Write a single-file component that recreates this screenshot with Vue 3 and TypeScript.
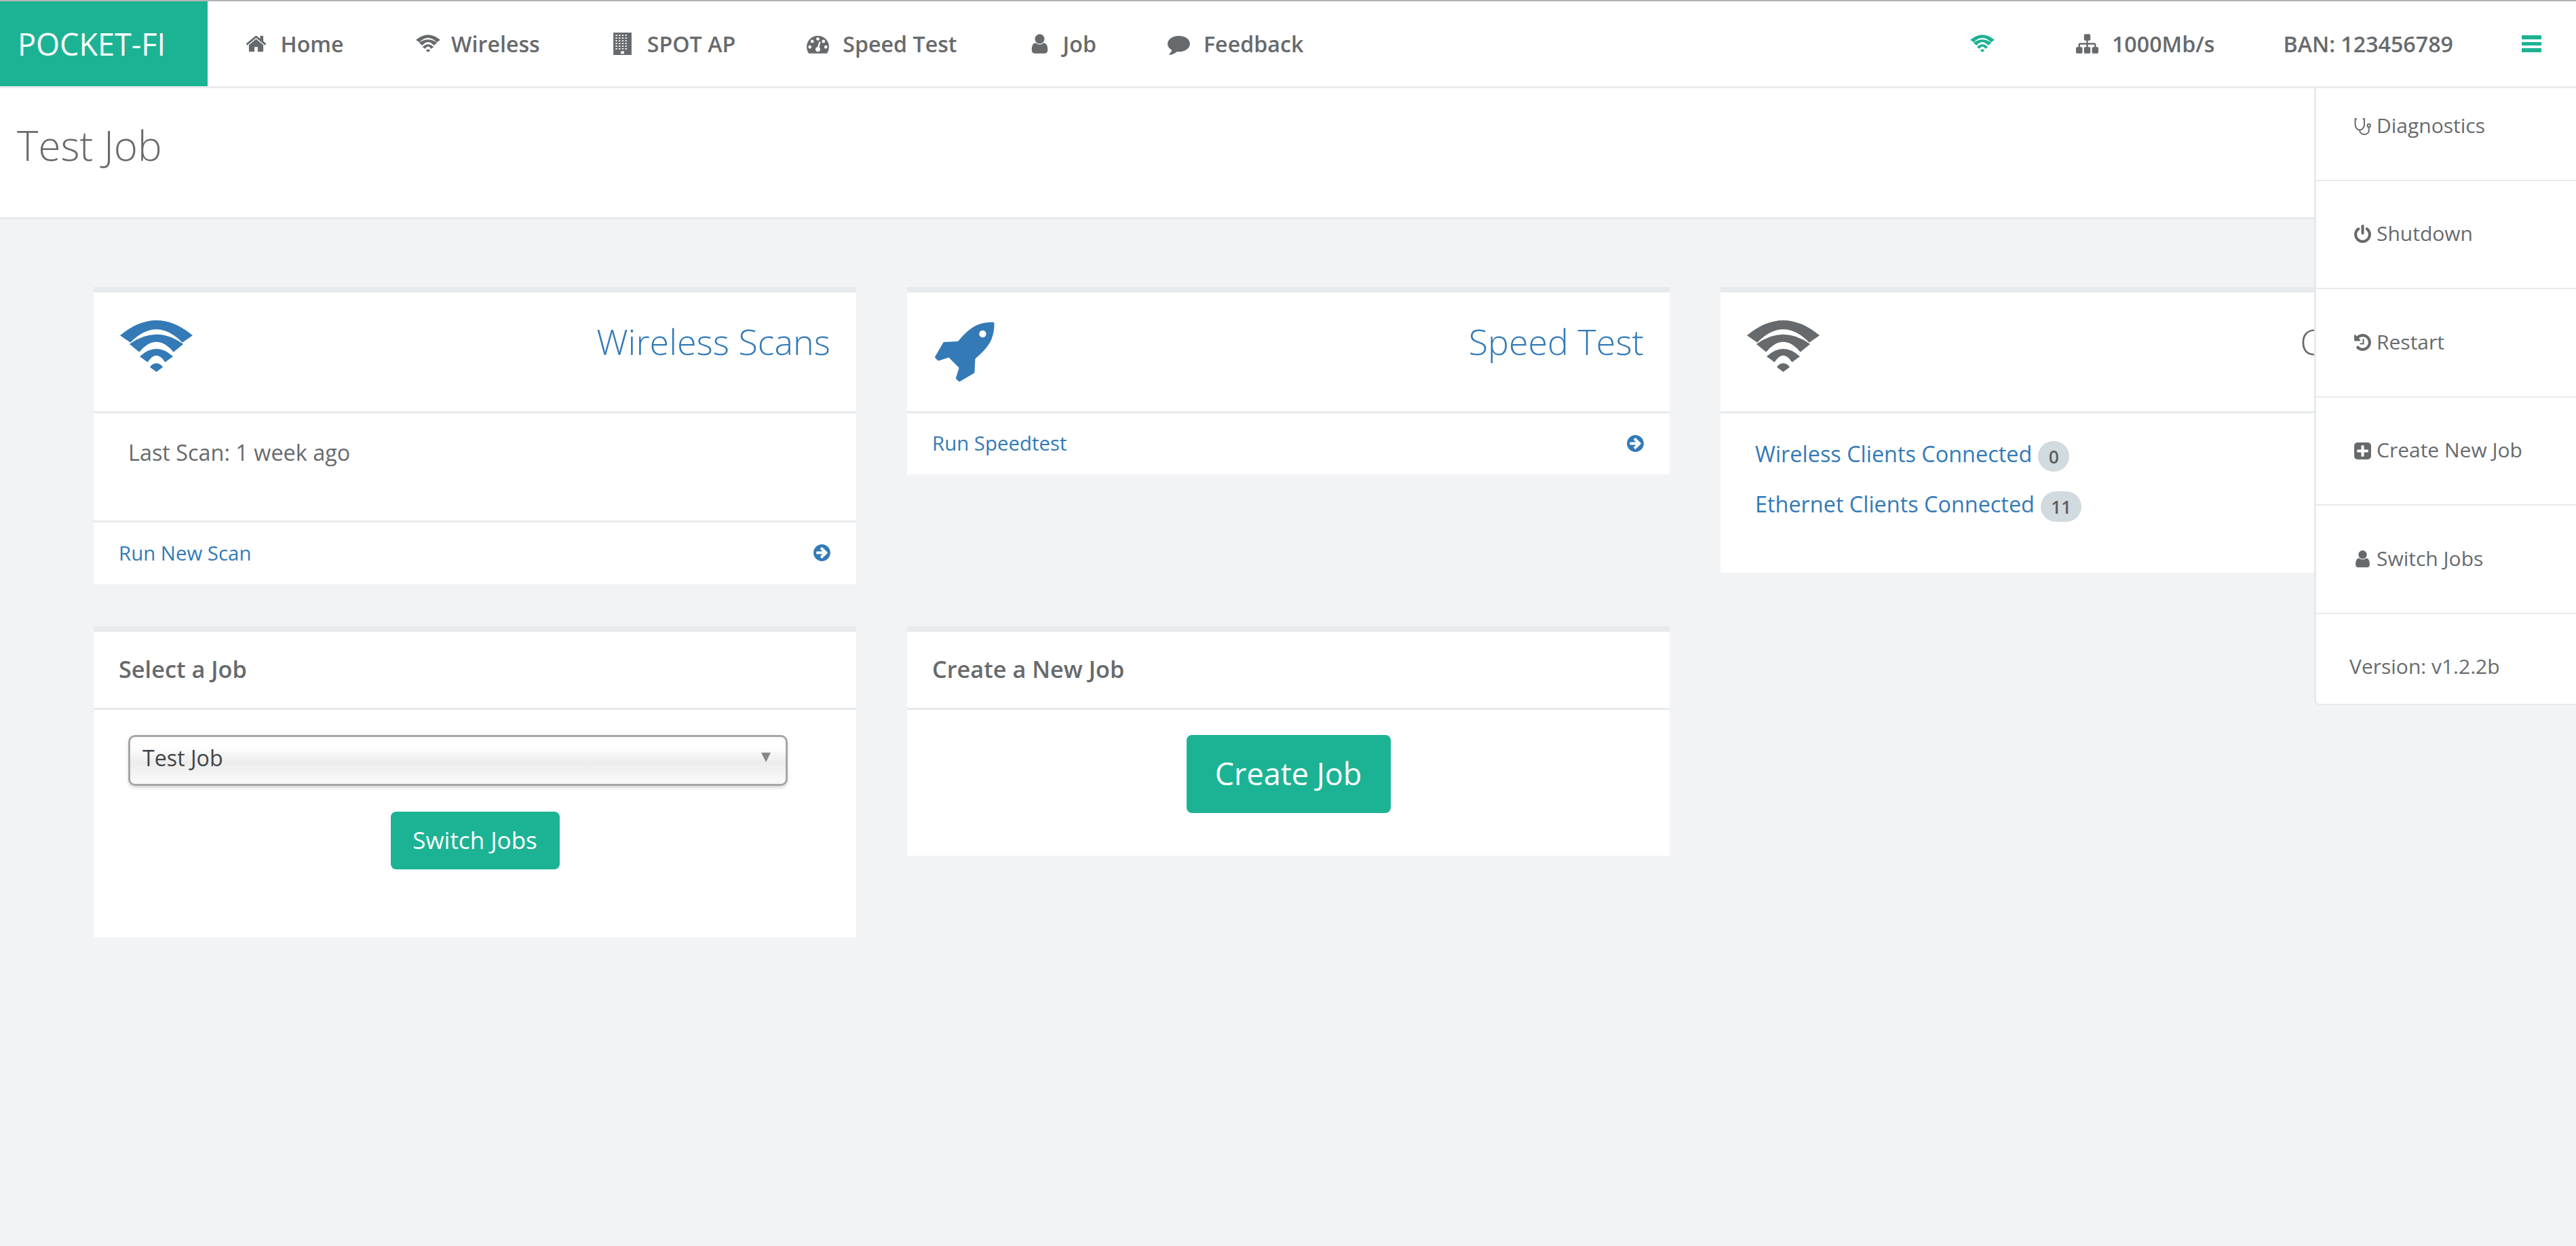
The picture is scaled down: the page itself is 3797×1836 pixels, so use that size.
<template>
  <div class="page">
    <nav class="topbar">
      <a class="brand">POCKET-FI</a>
      <ul class="nav">
        <li v-for="item in navItems" :key="item.label" class="nav-item">
          <svg class="nav-icon" :class="{ wide: item.icon === 'wifi' }" :viewBox="boxOf(item.icon)"><path :d="icons[item.icon]" /></svg>
          <span :class="{ 'pull-wifi': item.icon === 'wifi', 'pull-user': item.icon === 'user' }">{{ item.label }}</span>
        </li>
      </ul>
      <ul class="nav nav-right">
        <li class="nav-item status-wifi">
          <svg class="nav-icon wide" :viewBox="boxOf('wifi')"><path :d="icons.wifi" /></svg>
        </li>
        <li class="nav-item">
          <svg class="nav-icon" :viewBox="boxOf('sitemap')"><path :d="icons.sitemap" /></svg>
          <span>1000Mb/s</span>
        </li>
        <li class="nav-item">BAN: 123456789</li>
        <li class="nav-item burger"><i></i><i></i><i></i></li>
      </ul>
    </nav>

    <header class="title-bar">
      <h2>Test Job</h2>
    </header>

    <main class="content">
      <section class="card">
        <div class="stat-head">
          <svg class="big-icon wide blue" :viewBox="boxOf('wifi')"><path :d="icons.wifi" /></svg>
          <h3>Wireless Scans</h3>
        </div>
        <div class="scan-body">Last Scan: 1 week ago</div>
        <a class="card-foot">
          <span>Run New Scan</span>
          <svg class="go-icon" :viewBox="boxOf('arrow')"><path :d="icons.arrow" /></svg>
        </a>
      </section>

      <section class="card">
        <div class="stat-head">
          <svg class="big-icon blue" :viewBox="boxOf('rocket')"><path :d="icons.rocket" /></svg>
          <h3>Speed Test</h3>
        </div>
        <a class="card-foot first">
          <span>Run Speedtest</span>
          <svg class="go-icon" :viewBox="boxOf('arrow')"><path :d="icons.arrow" /></svg>
        </a>
      </section>

      <section class="card">
        <div class="stat-head">
          <svg class="big-icon wide grey" :viewBox="boxOf('wifi')"><path :d="icons.wifi" /></svg>
          <h3 class="muted">Connect</h3>
        </div>
        <div class="clients">
          <p v-for="row in clientRows" :key="row.label">
            <a>{{ row.label }}</a>
            <span class="badge">{{ row.count }}</span>
          </p>
        </div>
      </section>

      <section class="card select-card">
        <h4 class="card-title">Select a Job</h4>
        <div class="select-body">
          <div class="select-wrap">
            <select class="job-select">
              <option>Test Job</option>
            </select>
            <span class="caret"></span>
          </div>
          <button class="btn">Switch Jobs</button>
        </div>
      </section>

      <section class="card create-card">
        <h4 class="card-title">Create a New Job</h4>
        <div class="create-body">
          <button class="btn btn-lg">Create Job</button>
        </div>
      </section>
    </main>

    <aside class="side-menu">
      <a v-for="entry in menuItems" :key="entry.label" class="menu-item">
        <svg v-if="entry.icon" class="menu-icon" :viewBox="boxOf(entry.icon)"><path :d="icons[entry.icon]" /></svg>
        <svg v-else class="menu-icon scope" viewBox="-2 -2 29 29">
          <path d="M4 1.2H1.6v8.3a6.7 8 0 0 0 13.4 0V1.2h-2.4M8.3 17.5v1.5a6.7 5 0 0 0 13.4 0v-5.5" />
          <circle cx="21.7" cy="11" r="2.2" />
        </svg>
        <span>{{ entry.label }}</span>
      </a>
      <div class="menu-version">Version: v1.2.2b</div>
    </aside>
  </div>
</template>

<script setup lang="ts">
// office block: solid block, window holes wound the other way, and a door
const windowHoles = (): string => {
  let d = ''
  for (let row = 0; row < 6; row++) {
    for (let col = 0; col < 4; col++) {
      d += `M${345 + col * 256} ${180 + row * 215}v95h130v-95z`
    }
  }
  return d
}

const icons: Record<string, string> = {
  home: 'M1472 992v480q0 26-19 45t-45 19h-384v-384h-256v384h-384q-26 0-45-19t-19-45v-480q0-1 .5-3t.5-3l575-474 575 474q1 2 1 6zm223-69l-62 74q-8 9-21 11h-3q-13 0-21-7l-692-577-692 577q-12 8-24 7-13-2-21-11l-62-74q-8-10-7-23.5t11-21.5l719-599q32-26 76-26t76 26l244 204v-195q0-14 9-23t23-9h192q14 0 23 9t9 23v408l219 182q10 8 11 21.5t-7 23.5z',
  wifi: 'M0 22.3Q53.5-22.3 107 22.3L91.8 32.7Q53.5-6.1 15.2 32.7ZM13.8 35Q53.5 6.4 93.2 35L78.7 46.7Q53.5 16.7 28.3 46.7ZM29 53.3Q53.5 30.7 78 53.3L66.4 61.7Q53.5 41.7 40.6 61.7ZM53.5 63.3Q47.5 63.5 44 69L53.5 76 63 69Q59.5 63.5 53.5 63.3Z',
  building: `M168 0h1456v1792H168zM760 1500v200h272v-200z${windowHoles()}`,
  gauge: 'M384 1152q0-53-37.5-90.5t-90.5-37.5-90.5 37.5-37.5 90.5 37.5 90.5 90.5 37.5 90.5-37.5 37.5-90.5zm192-448q0-53-37.5-90.5t-90.5-37.5-90.5 37.5-37.5 90.5 37.5 90.5 90.5 37.5 90.5-37.5 37.5-90.5zm428 481l101-382q6-26-7.5-48.5t-38.5-29.5-48 6.5-30 39.5l-101 382q-60 5-107 43.5t-63 98.5q-20 77 20 146t117 89 146-20 89-117q16-60-6-117t-72-91zm660-33q0-53-37.5-90.5t-90.5-37.5-90.5 37.5-37.5 90.5 37.5 90.5 90.5 37.5 90.5-37.5 37.5-90.5zm-640-640q0-53-37.5-90.5t-90.5-37.5-90.5 37.5-37.5 90.5 37.5 90.5 90.5 37.5 90.5-37.5 37.5-90.5zm448 192q0-53-37.5-90.5t-90.5-37.5-90.5 37.5-37.5 90.5 37.5 90.5 90.5 37.5 90.5-37.5 37.5-90.5zm320 448q0 261-141 483-19 29-54 29h-1402q-35 0-54-29-141-221-141-483 0-182 71-348t191-286 286-191 348-71 348 71 286 191 191 286 71 348z',
  user: 'M1536 1399q0 109-62.5 187t-150.5 78h-854q-88 0-150.5-78t-62.5-187q0-85 8.5-160.5t31.5-152 58.5-131 94-89 134.5-34.5q131 128 313 128t313-128q76 0 134.5 34.5t94 89 58.5 131 31.5 152 8.5 160.5zm-256-887q0 159-112.5 271.5t-271.5 112.5-271.5-112.5-112.5-271.5 112.5-271.5 271.5-112.5 271.5 112.5 112.5 271.5z',
  comment: 'M1792 896q0 174-120 321.5t-326 233-450 85.5q-70 0-145-8-198 175-460 242-49 14-114 22-17 2-30.5-9t-17.5-29v-1q-3-4-.5-12t2-10 4.5-9.5l6-9 7-8.5 8-9q7-8 31-34.5t34.5-38 31-39.5 32.5-51 27-59 26-76q-157-89-247.5-220t-90.5-281q0-130 71-248.5t191-204.5 286-136.5 348-50.5q244 0 450 85.5t326 233 120 321.5z',
  sitemap: 'M1792 1248v320q0 40-28 68t-68 28h-320q-40 0-68-28t-28-68v-320q0-40 28-68t68-28h96v-192h-512v192h96q40 0 68 28t28 68v320q0 40-28 68t-68 28h-320q-40 0-68-28t-28-68v-320q0-40 28-68t68-28h96v-192h-512v192h96q40 0 68 28t28 68v320q0 40-28 68t-68 28h-320q-40 0-68-28t-28-68v-320q0-40 28-68t68-28h96v-192q0-52 38-90t90-38h512v-192h-96q-40 0-68-28t-28-68v-320q0-40 28-68t68-28h320q40 0 68 28t28 68v320q0 40-28 68t-68 28h-96v192h512q52 0 90 38t38 90v192h96q40 0 68 28t28 68z',
  arrow: 'M1412 896q0-27-18-45l-91-91-362-362q-18-18-45-18t-45 18l-91 91q-18 18-18 45t18 45l189 189h-502q-26 0-45 19t-19 45v128q0 26 19 45t45 19h502l-189 189q-19 19-19 45t19 45l91 91q18 18 45 18t45-18l362-362 91-91q18-18 18-45zm252 0q0 209-103 385.5t-279.5 279.5-385.5 103-385.5-103-279.5-279.5-103-385.5 103-385.5 279.5-279.5 385.5-103 385.5 103 279.5 279.5 103 385.5z',
  rocket: 'M1504 448q0-40-28-68t-68-28-68 28-28 68 28 68 68 28 68-28 28-68zm224-288q0 249-75.5 430.5t-253.5 360.5q-81 80-195 176l-20 379q-2 16-16 26l-384 224q-7 4-16 4-12 0-23-9l-64-64q-13-14-8-32l85-276-281-281-276 85q-3 1-9 1-14 0-23-9l-64-64q-17-19-5-39l224-384q10-14 26-16l379-20q96-114 176-195 188-187 358-258t431-71q14 0 23 9t9 23z',
  plus: 'M1408 960v-128q0-26-19-45t-45-19h-320v-320q0-26-19-45t-45-19h-128q-26 0-45 19t-19 45v320h-320q-26 0-45 19t-19 45v128q0 26 19 45t45 19h320v320q0 26 19 45t45 19h128q26 0 45-19t19-45v-320h320q26 0 45-19t19-45zm256-544v960q0 119-84.5 203.5t-203.5 84.5h-960q-119 0-203.5-84.5t-84.5-203.5v-960q0-119 84.5-203.5t203.5-84.5h960q119 0 203.5 84.5t84.5 203.5z',
  power: 'M1664 896q0 156-61 298t-164 245-245 164-298 61-298-61-245-164-164-245-61-298q0-182 80.5-343t226.5-270q43-32 95.5-25t83.5 50q32 42 24.5 94.5t-49.5 84.5q-98 74-151.5 181t-53.5 228q0 104 40.5 198.5t109.5 163.5 163.5 109.5 198.5 40.5 198.5-40.5 163.5-109.5 109.5-163.5 40.5-198.5q0-121-53.5-228t-151.5-181q-42-32-49.5-84.5t24.5-94.5q31-43 84-50t95 25q146 109 226.5 270t80.5 343zm-640-768v640q0 52-38 90t-90 38-90-38-38-90v-640q0-52 38-90t90-38 90 38 38 90z',
  history: 'M1664 896q0 156-61 298t-164 245-245 164-298 61q-172 0-327-72.5t-264-204.5q-7-10-6.5-22.5t8.5-20.5l137-138q10-9 25-9 16 2 23 12 73 95 179 147t225 52q104 0 198.5-40.5t163.5-109.5 109.5-163.5 40.5-198.5-40.5-198.5-109.5-163.5-163.5-109.5-198.5-40.5q-98 0-188 35.5t-160 101.5l137 138q31 30 14 69-17 40-59 40h-448q-26 0-45-19t-19-45v-448q0-42 40-59 39-17 69 14l130 129q107-101 244.5-156.5t284.5-55.5q156 0 298 61t245 164 164 245 61 298zm-640-288v448q0 14-9 23t-23 9h-320q-14 0-23-9t-9-23v-64q0-14 9-23t23-9h224v-352q0-14 9-23t23-9h64q14 0 23 9t9 23z',
}

const boxOf = (name: string) => (name === 'wifi' ? '0 0 107 76' : '0 0 1792 1792')

const navItems = [
  { label: 'Home', icon: 'home' },
  { label: 'Wireless', icon: 'wifi' },
  { label: 'SPOT AP', icon: 'building' },
  { label: 'Speed Test', icon: 'gauge' },
  { label: 'Job', icon: 'user' },
  { label: 'Feedback', icon: 'comment' },
]

const clientRows = [
  { label: 'Wireless Clients Connected', count: 0 },
  { label: 'Ethernet Clients Connected', count: 11 },
]

const menuItems = [
  { label: 'Diagnostics', icon: '' },
  { label: 'Shutdown', icon: 'power' },
  { label: 'Restart', icon: 'history' },
  { label: 'Create New Job', icon: 'plus' },
  { label: 'Switch Jobs', icon: 'user' },
]
</script>

<style>
html,
body {
  margin: 0;
  background: #f2f3f5;
}
</style>

<style scoped>
.page {
  position: relative;
  height: 1836px;
  overflow: hidden;
  background: #f2f3f5;
  color: #676a6c;
  font-family: 'Open Sans', sans-serif;
}

.topbar {
  display: flex;
  align-items: stretch;
  height: 125px;
  background: #fff;
  border-top: 2px solid #b4b4b4;
  border-bottom: 3px solid #e7eaec;
}

.brand {
  display: flex;
  align-items: center;
  width: 280px;
  padding-left: 26px;
  background: #1cb394;
  color: #fff;
  font-size: 45px;
}

.nav {
  display: flex;
  align-items: center;
  gap: 105px;
  margin: 0;
  padding: 0 0 0 54.5px;
  list-style: none;
}

.nav-right {
  gap: 101px;
  margin-left: auto;
  padding: 0 51px 0 0;
}

.nav-item {
  display: flex;
  align-items: center;
  gap: 20px;
  font-size: 32.2px;
  font-weight: 600;
}

.pull-wifi {
  margin-left: -4.5px;
}

.pull-user {
  margin-left: -2px;
}

.nav-icon {
  width: 33px;
  height: 33px;
  fill: #676a6c;
}

.nav-icon.wide {
  width: 36px;
  height: 26px;
  margin: -2px 1px 0;
}

.status-wifi {
  margin-right: 17.5px;
}

.status-wifi .nav-icon {
  fill: #1cb394;
}

.burger {
  display: grid;
  gap: 4.3px;
  width: 29px;
}

.burger i {
  height: 5.3px;
  background: #1cb394;
}

.title-bar {
  display: flex;
  align-items: center;
  height: 168px;
  padding: 0 0 22px 25px;
  background: #fff;
  border-bottom: 3px solid #e7eaec;
}

.title-bar h2 {
  margin: 0;
  font-size: 60px;
  font-weight: 300;
}

.content {
  display: grid;
  grid-template-columns: repeat(3, 1124px);
  column-gap: 75px;
  row-gap: 62px;
  align-items: start;
  padding: 100px 0 0 138px;
}

.card {
  background: #fff;
  border-top: 8px solid #e7eaec;
}

.stat-head {
  display: flex;
  align-items: flex-start;
  justify-content: space-between;
  height: 175px;
  padding: 0 38px 0 36px;
  border-bottom: 3px solid #e7eaec;
}

.stat-head h3 {
  margin: 36px 0 0;
  color: #337ab7;
  font-size: 52px;
  font-weight: 300;
}

/* title runs on under the side menu, only its first letter shows */
.stat-head h3.muted {
  margin-right: 37px;
  color: #676a6c;
}

.big-icon {
  width: 96px;
  height: 96px;
  margin-top: 37px;
}

.big-icon.wide {
  width: 107px;
  height: 76px;
  margin: 41px 0 0 3px;
}

.blue {
  fill: #337ab7;
}

.grey {
  fill: #676a6c;
}

.scan-body {
  height: 158px;
  padding: 35px 0 0 51px;
  box-sizing: border-box;
  font-size: 32.4px;
}

.card-foot {
  display: flex;
  align-items: center;
  justify-content: space-between;
  height: 94px;
  padding: 0 36px 2px 37px;
  border-top: 3px solid #e7eaec;
  box-sizing: border-box;
  color: #337ab7;
  font-size: 29.4px;
}

.card-foot.first {
  height: 90px;
  border-top: 0;
}

.go-icon {
  width: 29px;
  height: 29px;
  fill: #337ab7;
}

.clients {
  height: 235px;
  padding: 41px 0 0 51px;
  box-sizing: border-box;
}

.clients p {
  display: flex;
  align-items: center;
  gap: 9px;
  height: 45px;
  margin: 0 0 29px;
}

.clients a {
  padding-bottom: 9px;
  color: #337ab7;
  font-size: 32.4px;
}

.badge {
  display: flex;
  align-items: center;
  justify-content: center;
  min-width: 46px;
  height: 45px;
  padding: 0 15px;
  box-sizing: border-box;
  border-radius: 24px;
  background: #d1dade;
  color: #5e5e5e;
  font-size: 26.5px;
  font-weight: 600;
}

.card-title {
  display: flex;
  align-items: center;
  height: 109px;
  margin: 0;
  padding: 0 0 3px 37px;
  border-bottom: 3px solid #e7eaec;
  font-size: 34.3px;
  font-weight: 600;
}

.select-body {
  display: flex;
  flex-direction: column;
  align-items: center;
  height: 335px;
  padding-top: 37px;
  box-sizing: border-box;
}

.select-wrap {
  position: relative;
  align-self: flex-start;
  width: 972px;
  height: 75px;
  margin-left: 51px;
}

.job-select {
  width: 100%;
  height: 100%;
  padding: 0 0 8px 18px;
  box-sizing: border-box;
  appearance: none;
  border: 3px solid #a6a6a6;
  border-radius: 10px;
  background: linear-gradient(#fff 20%, #ececec 55%, #f4f4f4 80%, #fafafa);
  box-shadow: 0 3px 4px rgba(0, 0, 0, 0.15);
  color: #444;
  font-family: inherit;
  font-size: 32.2px;
}

.caret {
  position: absolute;
  top: 26px;
  right: 25px;
  border-top: 14px solid #888;
  border-left: 7.5px solid transparent;
  border-right: 7.5px solid transparent;
}

.btn {
  margin-top: 38px;
  width: 249px;
  height: 85px;
  padding: 0 0 3px;
  border: 0;
  border-radius: 8px;
  background: #1cb394;
  color: #fff;
  font-family: inherit;
  font-size: 35px;
}

.create-body {
  display: flex;
  justify-content: center;
  height: 215px;
  padding-top: 37px;
  box-sizing: border-box;
}

.btn-lg {
  width: 301px;
  height: 115px;
  margin: 0;
  font-size: 45px;
}

.side-menu {
  position: absolute;
  top: 130px;
  right: 0;
  width: 383px;
  border-left: 3px solid #e7eaec;
  border-bottom: 2px solid #e7eaec;
  border-bottom-left-radius: 8px;
  background: #fff;
  font-size: 30px;
}

.menu-item {
  display: flex;
  align-items: center;
  gap: 6px;
  height: 159.5px;
  padding-left: 54px;
  box-sizing: border-box;
  border-bottom: 2.5px solid #e7eaec;
}

.menu-item span {
  padding-bottom: 3px;
}

.menu-item:first-child {
  height: 136.5px;
  padding-bottom: 22px;
}

.menu-icon {
  width: 29px;
  height: 29px;
  fill: #676a6c;
}

.menu-icon.scope {
  fill: none;
  stroke: #676a6c;
  stroke-width: 2;
}

.menu-version {
  display: flex;
  align-items: center;
  height: 132px;
  padding: 22px 0 0 49px;
  box-sizing: border-box;
}
</style>
